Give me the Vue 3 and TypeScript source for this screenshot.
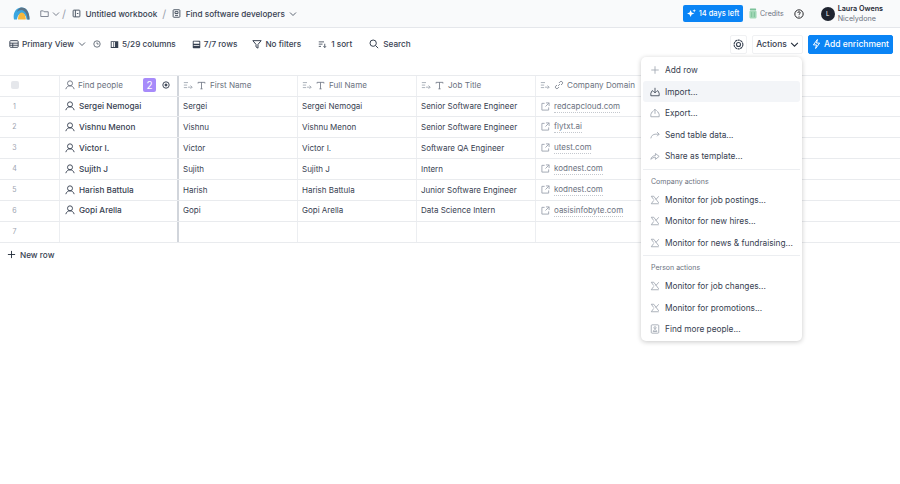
<script setup lang="ts">
interface Row { n: number; person: string; first: string; full: string; job: string; domain: string }
const rows: Row[] = [
  { n: 1, person: 'Sergei Nemogai', first: 'Sergei', full: 'Sergei Nemogai', job: 'Senior Software Engineer', domain: 'redcapcloud.com' },
  { n: 2, person: 'Vishnu Menon', first: 'Vishnu', full: 'Vishnu Menon', job: 'Senior Software Engineer', domain: 'flytxt.ai' },
  { n: 3, person: 'Victor I.', first: 'Victor', full: 'Victor I.', job: 'Software QA Engineer', domain: 'utest.com' },
  { n: 4, person: 'Sujith J', first: 'Sujith', full: 'Sujith J', job: 'Intern', domain: 'kodnest.com' },
  { n: 5, person: 'Harish Battula', first: 'Harish', full: 'Harish Battula', job: 'Junior Software Engineer', domain: 'kodnest.com' },
  { n: 6, person: 'Gopi Arella', first: 'Gopi', full: 'Gopi Arella', job: 'Data Science Intern', domain: 'oasisinfobyte.com' },
  { n: 7, person: '', first: '', full: '', job: '', domain: '' },
]
const textCols = ['First Name', 'Full Name', 'Job Title']
const topMenu = [
  { label: 'Add row', icon: 'plus' },
  { label: 'Import...', icon: 'import', active: true },
  { label: 'Export...', icon: 'export' },
  { label: 'Send table data...', icon: 'send' },
  { label: 'Share as template...', icon: 'share' },
]
const companyMenu = ['Monitor for job postings...', 'Monitor for new hires...', 'Monitor for news & fundraising...']
const personMenu = ['Monitor for job changes...', 'Monitor for promotions...']
</script>

<template>
  <div class="page">
    <header class="topbar">
      <svg class="logo" width="17" height="13" viewBox="0 0 17 13">
        <path d="M1 12.500C-.5 6 3 .5 8.500 .5c5 0 8 4.500 8 12h-3c0-3-2-6-5-6-2.500 0-4 2.500-4.500 6z" fill="#3aa6e0" />
        <path d="M8.500 .5c5 0 8 4.500 8 12h-2c0-5-2.500-9-6-9.500-2 0-3.500 .8-4.500 2C5 2 6.500 .5 8.500 .5z" fill="#5a7386" />
        <path d="M5 12.500c0-4 1.500-7 3.800-7s4 3 4 7z" fill="#f6b73c" />
      </svg>
      <svg class="ic first" width="9" height="9" viewBox="0 0 12 12" fill="none" stroke="#6b7280" stroke-width="1.100"><path d="M1 2.500h3.500l1 1.200H11V10H1z" /></svg>
      <svg class="ic chev" width="8" height="8" viewBox="0 0 8 8" fill="none" stroke="#6b7280" stroke-width=".9"><path d="M1 2.500l3 3 3-3" /></svg>
      <span class="slash">/</span>
      <svg class="ic" width="9" height="9" viewBox="0 0 12 12" fill="none" stroke="#4b5563" stroke-width="1.300"><rect x="1.500" y="1.500" width="9" height="9" rx="1" /><path d="M4.500 1.500v9M6.500 6h2" /></svg>
      <span class="crumb">Untitled workbook</span>
      <span class="slash two">/</span>
      <svg class="ic" width="9" height="9" viewBox="0 0 12 12" fill="none" stroke="#4b5563" stroke-width="1.300"><rect x="1.500" y="1" width="9" height="10" rx="1" /><path d="M4 3.500h4v2.500H4zM4 8.500h4" /></svg>
      <span class="crumb">Find software developers</span>
      <svg class="ic chev2" width="8" height="8" viewBox="0 0 8 8" fill="none" stroke="#4b5563" stroke-width=".9"><path d="M1 2.500l3 3 3-3" /></svg>
      <span class="spacer"></span>
      <span class="trial">
        <svg width="9" height="9" viewBox="0 0 10 10" fill="#fff"><path d="M4 1l1.200 3 3 1-3 1L4 9 2.800 6l-3-1 3-1zM8 0l.5 1.500L10 2l-1.500.5L8 4l-.5-1.500L6 2l1.500-.5z" /></svg>
        14 days left
      </span>
      <svg class="credit" width="8" height="11" viewBox="0 0 9 12"><rect x="1" y="0.500" width="7" height="2" rx=".6" fill="#7cc29a" /><rect x=".5" y="3" width="8" height="8.500" rx="1.200" fill="#a3d9b8" /><path d="M3 4.500v5.500M6 4.500v5.500" stroke="#6fb98e" stroke-width=".8" /></svg>
      <span class="credits">Credits</span>
      <svg class="help" width="10" height="10" viewBox="0 0 12 12" fill="none" stroke="#27272a" stroke-width="1.200"><circle cx="6" cy="6" r="5" /><path d="M4.500 4.700C4.500 3.800 5.200 3.300 6 3.300s1.500.5 1.500 1.300C7.500 5.800 6 5.700 6 7" /><path d="M6 8.200v1" /></svg>
      <span class="avatar">L</span>
      <span class="user"><b>Laura Owens</b><small>Nicelydone</small></span>
    </header>

    <div class="toolbar">
      <svg class="t-ic" width="10" height="10" viewBox="0 0 12 12" fill="none" stroke="#374151" stroke-width="1.100"><rect x="1" y="2" width="10" height="8" rx="1" /><path d="M1 5h10M4.500 5v5M1 7.500h10" /></svg>
      <span class="t-label">Primary View</span>
      <svg class="t-chev" width="8" height="8" viewBox="0 0 8 8" fill="none" stroke="#4b5563" stroke-width=".9"><path d="M1 2.500l3 3 3-3" /></svg>
      <svg class="t-clock" width="8" height="8" viewBox="0 0 10 10" fill="none" stroke="#4b5563" stroke-width="1"><circle cx="5" cy="5" r="4" /><path d="M5 3v2h2" /></svg>
      <svg class="t-ic a" width="9" height="9" viewBox="0 0 12 12" fill="#374151"><path d="M1 1.500h10v9H1zM2.200 2.700v6.600h2.300V2.700zM5.500 2.700v6.600h1.200V2.700z" fill-rule="evenodd" /></svg>
      <span class="t-label">5/29 columns</span>
      <svg class="t-ic b" width="9" height="9" viewBox="0 0 12 12" fill="#374151"><path d="M1 2a1 1 0 011-1h8a1 1 0 011 1v8a1 1 0 01-1 1H2a1 1 0 01-1-1zm1.200 0v3h7.600V2.200zm0 5v1h7.600V7z" fill-rule="evenodd" /></svg>
      <span class="t-label">7/7 rows</span>
      <svg class="t-ic c" width="10" height="10" viewBox="0 0 12 12" fill="none" stroke="#374151" stroke-width="1.200"><path d="M1 2h10L7.200 6.500V11L4.800 9.500v-3z" /></svg>
      <span class="t-label">No filters</span>
      <svg class="t-ic d" width="9" height="9" viewBox="0 0 12 12" fill="none" stroke="#374151" stroke-width="1.100"><path d="M1 2.500h7M1 5.500h5M1 8.500h3M9 5v5M7.300 8.300L9 10l1.700-1.700" /></svg>
      <span class="t-label gap4">1 sort</span>
      <svg class="t-ic e" width="10" height="10" viewBox="0 0 12 12" fill="none" stroke="#374151" stroke-width="1.200"><circle cx="5" cy="5" r="3.800" /><path d="M8 8l3 3" /></svg>
      <span class="t-label gap4">Search</span>
      <span class="spacer"></span>
      <button class="btn square">
        <svg width="11" height="11" viewBox="0 0 12 12" fill="none" stroke="#374151" stroke-width="1.200"><circle cx="6" cy="6" r="4.800" stroke-dasharray="2.500 .5" /><circle cx="6" cy="6" r="2.200" /></svg>
      </button>
      <button class="btn actions">Actions
        <svg width="9" height="9" viewBox="0 0 8 8" fill="none" stroke="#1f2937" stroke-width=".9"><path d="M1 2.500l3 3 3-3" /></svg>
      </button>
      <button class="btn enrich">
        <svg width="9" height="12" viewBox="0 0 10 12" fill="none" stroke="#fff" stroke-width="1.100"><path d="M6 1L1.500 7H5l-1 4 4.500-6H5z" /></svg>
        Add enrichment
      </button>
    </div>

    <section class="grid">
      <div class="row head">
        <div class="cell idx"><span class="check"></span></div>
        <div class="cell person">
          <svg class="p-ic" width="10" height="10" viewBox="0 0 12 12" fill="none" stroke="#6b7280" stroke-width="1.100"><circle cx="6" cy="4" r="3" /><path d="M1 11c.5-2.500 2.500-4 5-4s4.500 1.500 5 4" /></svg>
          <span class="h-text">Find people</span>
          <span class="badge">2</span>
          <svg class="gear" width="8" height="8" viewBox="0 0 10 10" fill="none" stroke="#374151" stroke-width="1.200"><circle cx="5" cy="5" r="4" /><circle cx="5" cy="5" r="1.300" fill="#374151" /></svg>
        </div>
        <div v-for="c in textCols" :key="c" class="cell col">
          <svg class="h-sort" width="10" height="9" viewBox="0 0 12 10" fill="none" stroke="#9ca3af" stroke-width="1"><path d="M1 1.500h5M1 4.500h4M1 7.500h4M6 7h5M9 5l2 2-2 2" /></svg>
          <svg class="h-t" width="9" height="9" viewBox="0 0 10 10" fill="none" stroke="#6b7280" stroke-width=".9"><path d="M1.200 2.800V1.500h7.600v1.300M5 1.500v7.200M3.800 8.700h2.400" /></svg>
          <span class="h-text">{{ c }}</span>
        </div>
        <div class="cell col domain">
          <svg class="h-sort" width="10" height="9" viewBox="0 0 12 10" fill="none" stroke="#9ca3af" stroke-width="1"><path d="M1 1.500h5M1 4.500h4M1 7.500h4M6 7h5M9 5l2 2-2 2" /></svg>
          <svg class="h-link" width="10" height="10" viewBox="0 0 12 12" fill="none" stroke="#6b7280" stroke-width="1"><path d="M5 7l2-2M3.500 6 2 7.500a1.800 1.800 0 002.500 2.500L6 8.500M8.500 6 10 4.500A1.800 1.800 0 007.500 2L6 3.500" /></svg>
          <span class="h-text">Company Domain</span>
        </div>
      </div>
      <div v-for="r in rows" :key="r.n" class="row data">
        <div class="cell idx num">{{ r.n }}</div>
        <div class="cell person">
          <template v-if="r.person">
            <svg class="p-ic dark" width="10" height="10" viewBox="0 0 12 12" fill="none" stroke="#374151" stroke-width="1.100"><circle cx="6" cy="4" r="3" /><path d="M1 11c.5-2.500 2.500-4 5-4s4.500 1.500 5 4" /></svg>
            <span class="p-name">{{ r.person }}</span>
          </template>
        </div>
        <div class="cell col body">{{ r.first }}</div>
        <div class="cell col body">{{ r.full }}</div>
        <div class="cell col body">{{ r.job }}</div>
        <div class="cell col body domain">
          <template v-if="r.domain">
            <svg class="ext" width="9" height="9" viewBox="0 0 10 10" fill="none" stroke="#9ca3af" stroke-width="1"><path d="M4 1.500H1v7.500h7.500V6M5.500 1h3.500v3.500M9 1 5 5" /></svg>
            <span class="link">{{ r.domain }}</span>
          </template>
        </div>
      </div>
      <div class="new-row">
        <svg width="9" height="9" viewBox="0 0 10 10" fill="none" stroke="#1f2937" stroke-width="1"><path d="M5 1v8M1 5h8" /></svg>
        New row
      </div>
    </section>

    <aside class="menu">
      <div v-for="m in topMenu" :key="m.label" class="item" :class="{ active: m.active }">
        <svg width="10" height="10" viewBox="0 0 12 12" fill="none" :stroke="m.active ? '#374151' : '#9ca3af'" stroke-width="1">
          <path v-if="m.icon === 'plus'" d="M6 1.500v9M1.500 6h9" />
          <path v-else-if="m.icon === 'import'" d="M6 1v6M4 5l2 2 2-2M3.500 4.500H2.500L1 7.500V10.500h10V7.500L9.500 4.500H8.500" />
          <path v-else-if="m.icon === 'export'" d="M6 7V1.500M4 3.500l2-2 2 2M3.500 4.500H2.500L1 7.500V10.500h10V7.500L9.500 4.500H8.500" />
          <path v-else-if="m.icon === 'send'" d="M1 10c.5-3 2.500-5 6-5h4M8.500 2.500 11 5 8.500 7.500" />
          <path v-else d="M1 10c.5-2.500 2.500-4.500 5.500-4.500V3L11 6.500 6.500 10V7.500C4.500 7.500 2.500 8.500 1 10z" />
        </svg>
        <span>{{ m.label }}</span>
      </div>
      <div class="sep"></div>
      <div class="group">Company actions</div>
      <div v-for="m in companyMenu" :key="m" class="item">
        <svg width="10" height="10" viewBox="0 0 12 12" fill="none" stroke="#9ca3af" stroke-width="1"><path d="M1.500 1.500h3l6 8M10.500 1.500 7 5.500M4.500 6.500 1.500 10.500h9M1.500 1.500l3 4" /></svg>
        <span>{{ m }}</span>
      </div>
      <div class="sep"></div>
      <div class="group">Person actions</div>
      <div v-for="m in personMenu" :key="m" class="item">
        <svg width="10" height="10" viewBox="0 0 12 12" fill="none" stroke="#9ca3af" stroke-width="1"><path d="M1.500 1.500h3l6 8M10.500 1.500 7 5.500M4.500 6.500 1.500 10.500h9M1.500 1.500l3 4" /></svg>
        <span>{{ m }}</span>
      </div>
      <div class="item">
        <svg width="10" height="10" viewBox="0 0 12 12" fill="none" stroke="#9ca3af" stroke-width="1"><rect x="1.500" y="1" width="9" height="10" rx="1" /><circle cx="6" cy="4.500" r="1.300" /><path d="M3.800 9c.2-1.300 1-2 2.200-2s2 .7 2.200 2z" /></svg>
        <span>Find more people...</span>
      </div>
    </aside>
  </div>
</template>

<style>
html, body { margin: 0; background: #fff; }
</style>

<style scoped>
.page { position: relative; width: 900px; height: 484px; overflow: hidden; background: #fff; font-family: Inter, "Liberation Sans", sans-serif; color: #1f2937; }
.topbar { height: 28px; box-sizing: border-box; background: #f9fafb; border-bottom: 1px solid #e5e7eb; display: flex; align-items: center; padding: 0 17px 0 13px; font-size: 8.200px; }
.logo { margin-right: 10px; flex: none; }
.ic { flex: none; }
.ic.first { margin-right: 3px; }
.slash { color: #9ca3af; font-size: 11px; margin: 0 6px 0 2px; }
.slash.two { margin: 0 6px 0 5px; }
.crumb { font-weight: 500; margin-left: 4.500px; color: #374151; }
.chev2 { margin-left: 4px; }
.spacer { flex: 1; }
.trial { background: #0a84f5; color: #fff; height: 17px; width: 60px; border-radius: 2px; font-size: 7.500px; font-weight: 500; display: flex; align-items: center; justify-content: center; gap: 3px; }
.credit { margin-left: 6px; }
.credits { color: #6b7280; font-size: 7px; margin-left: 3px; }
.help { margin-left: 10px; }
.avatar { margin-left: 17px; width: 14px; height: 14px; border-radius: 50%; background: #1f2430; color: #fff; font-size: 6px; display: flex; align-items: center; justify-content: center; }
.user { display: flex; flex-direction: column; margin-left: 3px; line-height: 10px; }
.user b { font-size: 7.200px; font-weight: 600; color: #1f2937; }
.user small { font-size: 7.200px; color: #6b7280; }
.toolbar { height: 32px; box-sizing: border-box; display: flex; align-items: center; padding: 0 7px 0 9px; }
.t-ic, .t-chev, .t-clock { flex: none; }
.t-label { font-size: 8.200px; font-weight: 500; color: #374151; margin-left: 3px; }
.t-label.gap4 { margin-left: 4px; }
.t-chev { margin-left: 4px; }
.t-clock { margin-left: 7px; }
.t-ic.a { margin-left: 9px; }
.t-ic.b { margin-left: 16px; }
.t-ic.c { margin-left: 15px; }
.t-ic.d { margin-left: 17px; }
.t-ic.e { margin-left: 17px; }
.btn { font-family: inherit; box-sizing: border-box; height: 19px; border: 1px solid #f0f1f3; background: #fff; border-radius: 2px; font-size: 8.500px; font-weight: 500; display: flex; align-items: center; justify-content: center; padding: 0; color: #374151; }
.btn.square { width: 17px; margin-right: 5px; }
.btn.actions { width: 51px; gap: 3px; margin-right: 5px; }
.btn.enrich { width: 85px; background: #0a84f5; border-color: #0a84f5; color: #fff; gap: 3px; }
.grid { margin-top: 15px; }
.row { display: flex; height: 20.900px; box-sizing: border-box; border-bottom: 1px solid #e9ebee; }
.row.head { height: 21.600px; border-top: 1px solid #e9ebee; }
.cell { box-sizing: border-box; height: 100%; display: flex; align-items: center; font-size: 8px; border-right: 1px solid #eceef1; }
.row.data .cell { padding-bottom: 1px; }
.row.head .cell { padding-bottom: 1px; }
.idx { width: 60px; justify-content: center; padding-right: 30px; }
.num { color: #9ca3af; font-size: 7px; }
.check { width: 8px; height: 8px; background: #e5e7eb; border-radius: 2px; }
.person { width: 119px; border-right: 2px solid #d1d5db; padding-left: 5px; }
.p-ic { flex: none; }
.p-ic.dark { margin-right: 4px; }
.h-text { color: #6b7280; margin-left: 4px; font-size: 8.100px; white-space: nowrap; }
.person .h-text { margin-left: 3px; flex: 1; }
.badge { width: 13px; height: 14px; background: #a78bfa; color: #fff; font-size: 10px; display: flex; align-items: center; justify-content: center; border-radius: 2px; margin-right: 6px; }
.gear { margin-right: 7px; }
.p-name { font-weight: 500; color: #374151; font-size: 8.200px; }
.col { width: 119px; padding-left: 4px; }
.domain { width: 120px; border-right: none; }
.h-sort { margin-right: 4px; flex: none; }
.h-t { flex: none; }
.h-link { flex: none; margin-right: -1px; }
.body { color: #374151; }
.ext { margin: 0 4px 0 1px; flex: none; }
.link { color: #6b7280; border-bottom: 1px dotted #c4c8ce; line-height: 11px; margin-top: 1px; }
.new-row { display: flex; align-items: center; gap: 4px; height: 24px; padding-left: 7px; font-size: 8.200px; font-weight: 500; color: #374151; }
.menu { position: absolute; left: 641px; top: 57px; width: 161px; height: 284px; box-sizing: border-box; background: #fff; border-radius: 5px; box-shadow: 0 1px 5px rgba(0, 0, 0, .22); padding: 2.300px 2px 0; z-index: 2; }
.item { display: flex; align-items: center; height: 21.500px; padding-left: 7px; gap: 5px; font-size: 8.300px; color: #374151; border-radius: 3px; white-space: nowrap; }
.item svg { flex: none; }
.item.active { background: #f3f5f8; }
.sep { height: 1px; background: #eceef1; margin: 2px 0; }
.group { font-size: 7px; color: #6b7280; padding: 2px 0 0 8px; height: 17px; box-sizing: border-box; display: flex; align-items: center; }
</style>
